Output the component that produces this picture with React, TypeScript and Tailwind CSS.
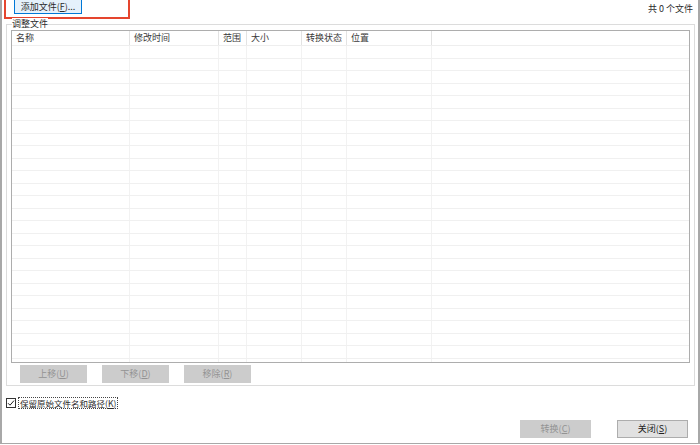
const cols = [
  { label: "名称", w: "w-[118px]" },
  { label: "修改时间", w: "w-[89px]" },
  { label: "范围", w: "w-[28px]" },
  { label: "大小", w: "w-[55px]" },
  { label: "转换状态", w: "w-[45px]" },
  { label: "位置", w: "w-[85px]" },
];

const rows = Array.from({ length: 26 }, (_, i) => i);

function Btn({ text, k, disabled, w = "w-[67px]" }: { text: string; k: string; disabled?: boolean; w?: string }) {
  return (
    <div
      className={`${w} h-[18px] flex items-center justify-center text-[9px] ${
        disabled ? "bg-[#cccccc] text-[#939393]" : "bg-[#e1e1e1] border border-[#adadad] text-[#222]"
      }`}
    >
      <span>
        {text}(<span className="underline">{k}</span>)
      </span>
    </div>
  );
}

export default function App() {
  return (
    <div
      className="w-[700px] h-[444px] bg-white border-l-2 border-r-2 border-b border-[#a8a8a8] flex flex-col overflow-hidden text-[#2b2b2b]"
      style={{ fontFamily: '"Noto Sans CJK SC", "Noto Sans", sans-serif' }}
    >
      {/* top bar */}
      <div className="flex h-[20px] shrink-0">
        <div className="ml-[2px] w-[126px] h-[19px] border-x-2 border-b-2 border-[#e5452e]">
          <div className="ml-[8px] w-[68px] h-[14px] bg-[#e5f1fb] border-x border-b border-[#0078d7] flex items-center justify-center text-[9px] leading-none">
            <span>
              添加文件(<span className="underline">F</span>)...
            </span>
          </div>
        </div>
        <div className="ml-auto mr-[5px] mt-[4px] text-[9px] leading-[10px] whitespace-pre">共 0 个文件</div>
      </div>

      {/* group box */}
      <div className="relative ml-[4px] mr-[3px] mt-[4px] border border-[#dcdcdc] pt-[5px] px-[4px] pb-[2px]">
        <div className="absolute -top-[7px] left-[5px] bg-white text-[9px] leading-[11px]">调整文件</div>

        <div className="h-[333px] border border-[#adadad] overflow-hidden">
          <div className="flex h-[15px] border-b border-[#eeeeee] text-[9px] text-[#3a3a3a]">
            {cols.map((c) => (
              <div key={c.label} className={`${c.w} shrink-0 border-r border-[#e3e3e3] pl-[4px] flex items-center`}>
                {c.label}
              </div>
            ))}
            <div className="flex-1" />
          </div>
          {rows.map((r) => (
            <div key={r} className="flex h-[12.5px] border-b border-[#f0f0f0]">
              {cols.map((c) => (
                <div key={c.label} className={`${c.w} shrink-0 border-r border-[#f2f2f2]`} />
              ))}
              <div className="flex-1" />
            </div>
          ))}
        </div>

        <div className="flex gap-[15px] ml-[9px] mt-[2px]">
          <Btn text="上移" k="U" disabled />
          <Btn text="下移" k="D" disabled />
          <Btn text="移除" k="R" disabled />
        </div>
      </div>

      {/* checkbox */}
      <div className="flex items-center h-[12px] mt-[11px] ml-[4px]">
        <div className="w-[10px] h-[10px] border border-[#333] flex items-center justify-center">
          <svg width="8" height="8" viewBox="0 0 8 8">
            <path d="M1 4.2 L3 6.2 L7 1.6" fill="none" stroke="#222" strokeWidth="1" />
          </svg>
        </div>
        <div className="ml-[2px] border border-dotted border-[#444] h-[12px] flex items-center px-[1px] text-[8.5px] leading-none">
          <span>
            保留原始文件名和路径(<span className="underline">K</span>)
          </span>
        </div>
      </div>

      {/* bottom buttons */}
      <div className="flex justify-end gap-[26px] mr-[10px] mt-[11px]">
        <Btn text="转换" k="C" disabled w="w-[71px]" />
        <Btn text="关闭" k="S" w="w-[71px]" />
      </div>
    </div>
  );
}
